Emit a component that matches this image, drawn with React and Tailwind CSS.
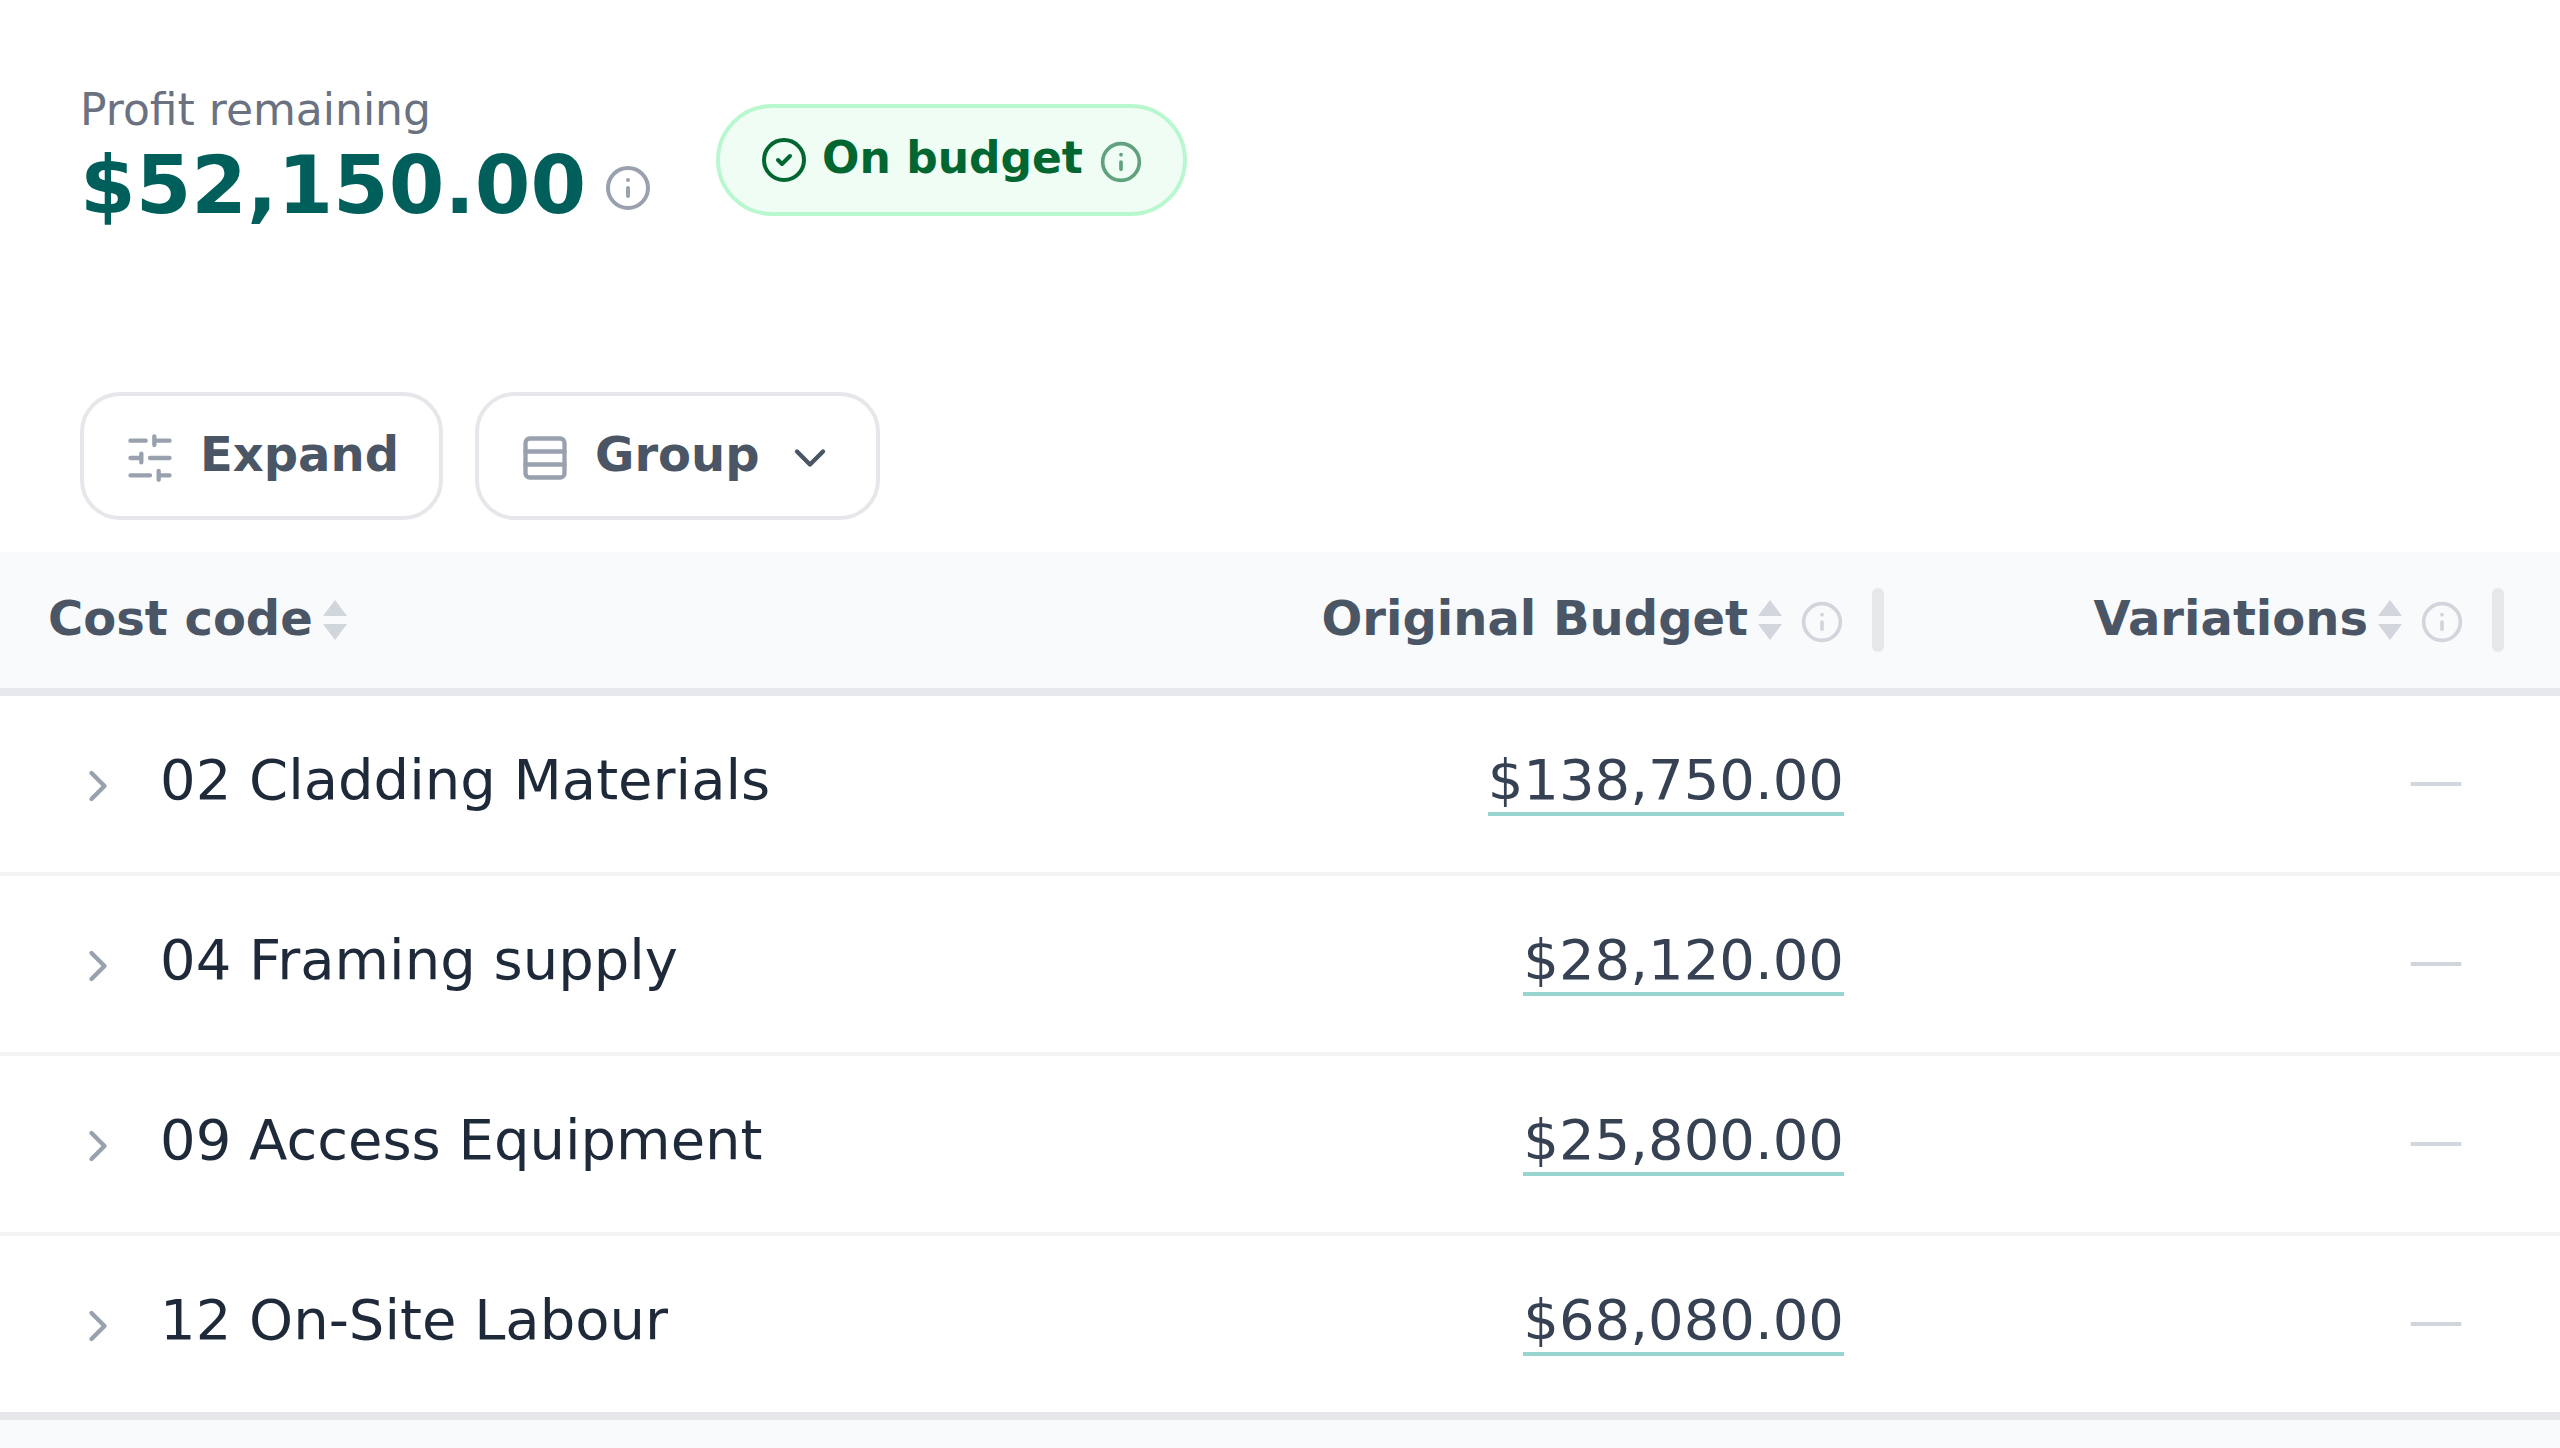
import { ChevronDown, ChevronRight, CircleCheck, Info, Rows3 } from 'lucide-react';
import { useState } from 'react';

const columns = [
    { key: 'budget', label: 'Original Budget' },
    { key: 'variations', label: 'Variations' },
];

const rows = [
    { name: '02 Cladding Materials', budget: '$138,750.00' },
    { name: '04 Framing supply', budget: '$28,120.00' },
    { name: '09 Access Equipment', budget: '$25,800.00' },
    { name: '12 On-Site Labour', budget: '$68,080.00' },
];

const SlidersIcon = ({ className }) => (
    <svg
        className={className}
        viewBox="0 0 24 24"
        fill="none"
        stroke="currentColor"
        strokeWidth={2}
        strokeLinecap="round"
        strokeLinejoin="round"
        aria-hidden="true"
    >
        <path d="M21 4h-7M10 4H3M21 12h-9M8 12H3M21 20h-5M12 20H3M14 2v4M8 10v4M16 18v4" />
    </svg>
);

const SortArrows = () => (
    <svg className="w-8 h-10 shrink-0 text-gray-300" viewBox="0 0 8 10" fill="currentColor" aria-hidden="true">
        <path d="M4 0 7 4H1Z" />
        <path d="M4 10 1 6h6Z" />
    </svg>
);

const SortButton = ({ label }) => (
    <button type="button" className="flex items-center gap-1.5 whitespace-nowrap">
        <span className="pb-1">{label}</span>
        <SortArrows />
    </button>
);

const InfoButton = ({ label, className, iconClass }) => (
    <button type="button" aria-label={label} className={`mt-1 shrink-0 ${className}`}>
        <Info className={iconClass} />
    </button>
);

const ToolbarButton = ({ children, ...props }) => (
    <button
        type="button"
        className="flex items-center gap-6 rounded-[40px] border-4 border-gray-200 bg-white px-10 pt-6.5 pb-7.5 text-[48px] leading-[64px] font-semibold text-gray-600"
        {...props}
    >
        {children}
    </button>
);

/**
 * Profit figure and budget status
 */
const Summary = () => (
    <div className="flex items-start gap-16 px-20 pt-20.5">
        <div>
            <div className="text-[44px] leading-[56px] text-gray-500">Profit remaining</div>
            <div className="flex items-center gap-4.5">
                <span className="text-[80px] leading-[96px] font-bold text-teal-800">$52,150.00</span>
                <InfoButton label="About profit remaining" className="text-gray-400" iconClass="size-12" />
            </div>
        </div>

        <div className="mt-5.5 flex items-center gap-3.5 rounded-full border-4 border-green-200 bg-green-50 px-10 py-6 text-green-800">
            <CircleCheck className="size-12 shrink-0" />
            <span className="pb-1 text-[44px] leading-[52px] font-semibold">On budget</span>
            <InfoButton label="About budget status" className="ml-0.5 opacity-60" iconClass="size-11" />
        </div>
    </div>
);

const BudgetTable = () => {
    const [openRow, setOpenRow] = useState(null);

    return (
        <table className="w-full table-fixed border-separate border-spacing-0">
            <colgroup>
                <col />
                <col className="w-[620px]" />
                <col className="w-[668px]" />
            </colgroup>
            <thead>
                <tr className="bg-gray-50 text-[48px] leading-[60px] text-gray-600">
                    <th scope="col" className="border-b-8 border-gray-200 py-9 pl-12 text-left font-semibold">
                        <SortButton label="Cost code" />
                    </th>
                    {columns.map((column) => (
                        <th
                            key={column.key}
                            scope="col"
                            className="border-b-8 border-gray-200 py-9 pr-2 font-semibold last:pr-14"
                        >
                            <div className="flex items-center justify-end">
                                <SortButton label={column.label} />
                                <InfoButton
                                    label={`About ${column.label}`}
                                    className="ml-3.5 text-gray-300"
                                    iconClass="size-11"
                                />
                                {/* Resize handle */}
                                <div className="ml-7 h-16 w-3 shrink-0 rounded-full bg-gray-200" />
                            </div>
                        </th>
                    ))}
                </tr>
            </thead>
            <tbody>
                {rows.map((row) => (
                    <tr key={row.name} className="group text-[56px] leading-[80px]">
                        <td className="border-b-4 border-gray-100 pt-11 pb-13 pl-18 align-top text-gray-800 group-last:border-b-0">
                            <button
                                type="button"
                                aria-expanded={openRow === row.name}
                                onClick={() => setOpenRow(openRow === row.name ? null : row.name)}
                                className="block text-left"
                            >
                                <ChevronRight className="mt-1 mr-9 inline-block size-13 align-middle text-gray-400" />
                                {row.name}
                            </button>
                        </td>
                        <td className="border-b-4 border-gray-100 pt-11 pr-12 pb-13 text-right align-top group-last:border-b-0">
                            <a href="#budget" className="border-b-4 border-teal-600/40 text-gray-700">
                                {row.budget}
                            </a>
                        </td>
                        <td className="border-b-4 border-gray-100 pt-11 pr-24 pb-13 text-right align-top text-gray-300 group-last:border-b-0">
                            —
                        </td>
                    </tr>
                ))}
            </tbody>
        </table>
    );
};

const App = () => (
    <div className="flex min-h-screen flex-col bg-white font-['DejaVu_Sans',sans-serif]">
        <Summary />

        {/* Toolbar */}
        <div className="mt-39.5 mb-8 flex items-center gap-8 px-20">
            <ToolbarButton>
                <SlidersIcon className="mt-2 size-13 text-gray-400" />
                Expand
            </ToolbarButton>
            <ToolbarButton aria-haspopup="menu">
                <Rows3 className="mt-2 size-13 text-gray-400" />
                Group
                <ChevronDown className="mt-2 size-13" />
            </ToolbarButton>
        </div>

        <BudgetTable />
        <div className="flex-1 border-t-8 border-gray-200 bg-gray-50" />
    </div>
);

export default App;
